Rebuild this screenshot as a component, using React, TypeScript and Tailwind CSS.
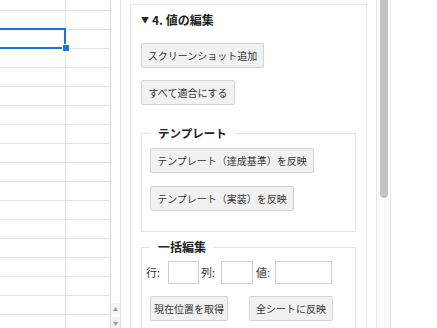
import React from 'react';

const font = { fontFamily: '"Noto Sans CJK JP", "Noto Sans", sans-serif' };

function Btn({ label, className = '' }: { label: string; className?: string }) {
  return (
    <button
      type="button"
      className={`h-[25px] px-[6px] rounded-[2px] border border-[#d3d3d3] bg-[#f1f1f1] text-[10px] leading-none text-[#333] inline-flex items-center justify-center whitespace-nowrap ${className}`}
    >
      {label}
    </button>
  );
}

function Sheet() {
  const rows = Array.from({ length: 17 });
  return (
    <div className="relative w-[111px] shrink-0 h-full overflow-hidden">
      <div className="flex h-[11px] border-b border-[#e2e2e2]">
        <div className="w-[66px] border-r border-[#e2e2e2]" />
        <div className="w-[45px] border-r border-[#dcdcdc]" />
      </div>
      {rows.map((_, i) => (
        <div key={i} className="flex h-[19px] border-b border-[#e2e2e2]">
          <div className="w-[66px] border-r border-[#e2e2e2]" />
          <div className="w-[45px] border-r border-[#dcdcdc]" />
        </div>
      ))}
      {/* selected cell */}
      <div className="absolute left-[-3px] top-[28px] w-[69px] h-[21px] border-2 border-[#1a73e8]" />
      <div className="absolute left-[63px] top-[45px] w-[6px] h-[6px] bg-[#1a73e8] border border-white box-content -translate-x-[1px] -translate-y-[1px]" />
    </div>
  );
}

function SheetScroll() {
  return (
    <div className="w-[9px] shrink-0 h-full flex flex-col justify-end bg-white">
      <div className="h-[11px] mb-[3px] bg-[#f3f3f3] flex items-center justify-center text-[5px] text-[#999]">▲</div>
      <div className="h-[11px] bg-[#f3f3f3] flex items-center justify-center text-[5px] text-[#999]">▼</div>
    </div>
  );
}

function PanelScroll() {
  return (
    <div className="w-[15px] shrink-0 h-full border-x border-[#e6e6e6] bg-[#fafafa] flex flex-col">
      <div className="pl-[3px] pr-[2px] bg-white">
        <div className="h-[198px] rounded-b-full bg-[#c3c3c3]" />
      </div>
    </div>
  );
}

export default function App() {
  return (
    <div className="w-[437px] h-[328px] overflow-hidden bg-white flex text-[#222]" style={font}>
      <Sheet />
      <SheetScroll />
      <div className="w-[256px] shrink-0 h-full border-l border-[#e0e0e0] pl-[9px] pt-[4px] overflow-hidden">
        <div className="w-[237px] border border-[#e6e6e6] px-[10px] pt-[7px]">
          <div className="flex items-center h-[16px] font-bold text-[12px] leading-[16px]">
            <span className="text-[8px] mr-[3px]">▼</span>
            <span>4. 値の編集</span>
          </div>
          <div className="mt-[15px] flex flex-col items-start gap-[12px]">
            <Btn label="スクリーンショット追加" className="w-[123px]" />
            <Btn label="すべて適合にする" className="w-[94px]" />
          </div>

          <fieldset className="mt-[20px] border border-[#e3e3e3] px-[8px] pb-[20px]">
            <legend className="px-[8px] text-[11.5px] leading-[16px] font-bold">テンプレート</legend>
            <div className="pt-[7px] flex flex-col items-start gap-[13px]">
              <Btn label="テンプレート（達成基準）を反映" className="w-[164px]" />
              <Btn label="テンプレート（実装）を反映" className="w-[144px]" />
            </div>
          </fieldset>

          <fieldset className="mt-[7px] border border-[#e3e3e3] px-[8px] pb-[20px]">
            <legend className="px-[8px] text-[12px] leading-[16px] font-bold">一括編集</legend>
            <div className="pt-[6px] -ml-[4px] flex items-center text-[11px] text-[#333]">
              <span className="w-[22px]">行:</span>
              <input className="w-[31px] h-[23px] border border-[#cfcfcf] bg-white" />
              <span className="w-[22px] pl-[2px]">列:</span>
              <input className="w-[32px] h-[23px] border border-[#cfcfcf] bg-white" />
              <span className="w-[22px] pl-[3px]">値:</span>
              <input className="w-[57px] h-[23px] border border-[#cfcfcf] bg-white" />
            </div>
            <div className="mt-[12px] flex items-center gap-[21px]">
              <Btn label="現在位置を取得" className="w-[78px]" />
              <Btn label="全シートに反映" className="w-[84px]" />
            </div>
          </fieldset>
        </div>
      </div>
      <PanelScroll />
      <div className="flex-1 bg-white" />
    </div>
  );
}
